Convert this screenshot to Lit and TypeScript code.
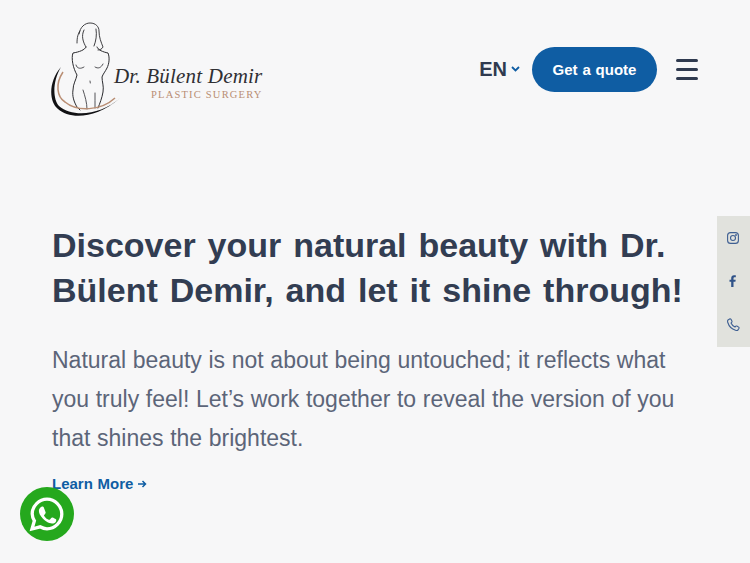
import { LitElement, html, css, svg } from "lit";
import { customElement } from "lit/decorators.js";

const logo = svg`<svg class="logo" width="218" height="96" viewBox="0 0 218 96" fill="none">
  <g stroke="#2a2a2e" stroke-linecap="round" fill="none">
    <path stroke-width="0.9" d="M28 12 C29 5 34 1 39 1 C45 1 48 5 48 9 C48 15 50 20 52 25 C51 27 49 28 47 28"/>
    <path stroke-width="0.9" d="M26 21 C26 15 27 12 29 9 M33 8 C30 14 32 20 35 25 M45 7 C46 13 45 19 43 24"/>
    <path stroke-width="1" d="M35 25 C34 28 28 30 22 31 C20 36 22 46 26 53 C25 58 22 62 22 68 C21 74 23 80 26 85 L29 88"/>
    <path stroke-width="1" d="M46 25 C47 28 52 30 57 31 C59 36 58 42 56 46 C54 50 52 52 51 55 C51 60 53 64 52 70 C51 76 49 81 47 86"/>
    <path stroke-width="0.8" d="M25 43 C26 47 30 47 33 45 M44 45 C47 47 50 46 52 42 M32 68 C34 74 36 81 36 87 M44 71 C44 76 44 81 44 86 M39 59 L39.300 61"/>
  </g>
  <path d="M10 45 C-3 60 -2 80 7 87 C18 97 44 98 69 76 C50 93 22 96 8 84 C2 78 1 60 10 45 Z" fill="#111114"/>
  <path d="M12 50 C4 62 6 75 14 80 C26 90 50 89 64 76" stroke="#b98e74" stroke-width="1.500" fill="none"/>
  <text x="63" y="61" class="script">Dr. Bülent Demir</text>
  <text x="100" y="76" class="sub">PLASTIC SURGERY</text>
</svg>`;

@customElement("app-root")
export class AppRoot extends LitElement {
  static styles = css`
    :host { display: block; position: relative; height: 563px; overflow: hidden; background: #f7f7f8; font-family: "Liberation Sans", Arial, sans-serif; text-rendering: optimizeLegibility; }
    .header { display: flex; align-items: center; justify-content: space-between; height: 138px; padding: 0 52px; box-sizing: border-box; }
    .logo { display: block; margin-top: 2px; margin-left: -1px; }
    .script { font-family: "Liberation Serif", serif; font-style: italic; font-size: 21px; fill: #2f2f33; letter-spacing: 0.2px; }
    .sub { font-family: "Liberation Serif", serif; font-size: 10.500px; fill: #b98e74; letter-spacing: 1.200px; }
    .actions { display: flex; align-items: center; }
    .lang { display: flex; align-items: center; gap: 4px; font-size: 20px; font-weight: 700; color: #2f3a4f; margin-right: 12px; }
    .quote { display: flex; align-items: center; justify-content: center; width: 125px; height: 45px; border-radius: 23px; background: #0f5da3; color: #fff; font-size: 15px; word-spacing: 0.7px; font-weight: 700; margin-right: 19px; }
    .burger { display: flex; flex-direction: column; gap: 6px; width: 22px; }
    .burger span { display: block; height: 3px; border-radius: 2px; background: #2f3a4f; }
    .hero { padding: 85px 60px 0 52px; }
    h1 { margin: 0 0 28px; font-size: 34px; line-height: 45px; font-weight: 700; color: #323d52; word-spacing: 2.5px; white-space: nowrap; }
    p { margin: 0 0 16px; font-size: 23px; line-height: 39px; color: #5c6579; word-spacing: 0.25px; width: 640px; }
    .more { display: flex; align-items: center; gap: 4px; font-size: 15px; word-spacing: 0.5px; line-height: 20px; font-weight: 700; color: #0f5da3; }
    .social { position: absolute; right: 0; top: 216px; width: 33px; height: 131px; padding: 0 1px 1px 0; box-sizing: border-box; background: #e1e2dd; display: flex; flex-direction: column; align-items: center; justify-content: space-around; }
    .wa { position: absolute; left: 20px; top: 487px; width: 54px; height: 54px; border-radius: 50%; background: #25a81d; display: flex; align-items: center; justify-content: center; }
  `;

  render() {
    return html`
      <div class="header">
        ${logo}
        <div class="actions">
          <div class="lang">EN
            <svg width="9" height="6" viewBox="0 0 9 6" fill="none"><path d="M1 1 L4.500 4.500 L8 1" stroke="#0f5da3" stroke-width="1.800"/></svg>
          </div>
          <div class="quote">Get a quote</div>
          <div class="burger"><span></span><span></span><span></span></div>
        </div>
      </div>
      <div class="hero">
        <h1>Discover your natural beauty with Dr.<br />Bülent Demir, and let it shine through!</h1>
        <p>Natural beauty is not about being untouched; it reflects what you truly feel! Let’s work together to reveal the version of you that shines the brightest.</p>
        <div class="more">Learn More
          <svg width="10" height="10" viewBox="0 0 10 10" fill="none"><path d="M1 5 H8.500 M5.500 2 L8.500 5 L5.500 8" stroke="#0f5da3" stroke-width="1.500"/></svg>
        </div>
      </div>
      <div class="social">
        <svg width="12" height="12" viewBox="0 0 12 12" fill="none" stroke="#3e5f92" stroke-width="1.100"><rect x="0.600" y="0.600" width="10.800" height="10.800" rx="3"/><circle cx="6" cy="6" r="2.500"/><circle cx="9" cy="3" r="0.400"/></svg>
        <svg width="8" height="12" viewBox="0 0 8 12"><path fill="#2f5288" d="M2.200 12 V6.700 H0.500 V4.700 H2.200 V3.200 C2.200 1.200 3.300 0.200 5 0.200 H6.800 V2.200 H5.600 C4.800 2.200 4.500 2.600 4.500 3.300 V4.700 H6.700 L6.400 6.700 H4.500 V12 Z"/></svg>
        <svg width="13" height="13" viewBox="0 0 13 13" fill="none" stroke="#3e5f92" stroke-width="1.100"><path d="M1 2 L3 0.800 C3.500 0.700 3.800 1 4 1.300 L5 3.300 C5.100 3.700 5 4 4.700 4.300 L4 5 C4.800 6.800 6.200 8.200 8 9 L8.800 8.200 C9.100 7.900 9.400 7.900 9.800 8.100 L11.700 9.100 C12.100 9.400 12.200 9.700 12 10.200 L11 12 C10.500 12.500 9.500 12.500 8.500 12.200 C4.500 11 2 8.500 0.800 4.500 C0.500 3.500 0.500 2.500 1 2 Z"/></svg>
      </div>
      <div class="wa">
        <svg width="36" height="36" viewBox="0 0 36 36">
          <path fill="none" stroke="#fff" stroke-width="3.300" d="M3 33 L5.400 24.800 C4 22.500 3.200 20.200 3.200 17.800 C3.200 10 10 3.200 18 3.200 C26 3.200 32.800 10 32.800 18 C32.800 26 26 32.800 18 32.800 C15.500 32.800 13.200 32 11.100 30.800 Z"/>
          <path fill="#fff" d="M13.400 10.500 C12.800 10.500 12 10.700 11.400 11.400 C10.800 12.100 9.900 13.200 9.900 15 C9.900 17.500 11.600 19.800 12 20.300 C12.500 20.900 15.500 25.500 20.300 27 C23.500 28 25.500 27.200 26.500 26.200 C27.200 25.500 27.400 24 27.200 23.500 C27 23.100 24.200 21.700 23.500 21.500 C22.900 21.300 22.600 21.500 22.200 22 L21 23.500 C20.600 23.900 20.200 23.900 19.700 23.700 C18.500 23.200 16.800 22.500 15.200 19.900 C14.800 19.200 15.200 18.900 15.700 18.400 L16.500 17.200 C16.700 16.800 16.700 16.500 16.500 16.100 L15 12 C14.700 11 14.300 10.500 13.400 10.500 Z"/>
        </svg>
      </div>
    `;
  }
}
